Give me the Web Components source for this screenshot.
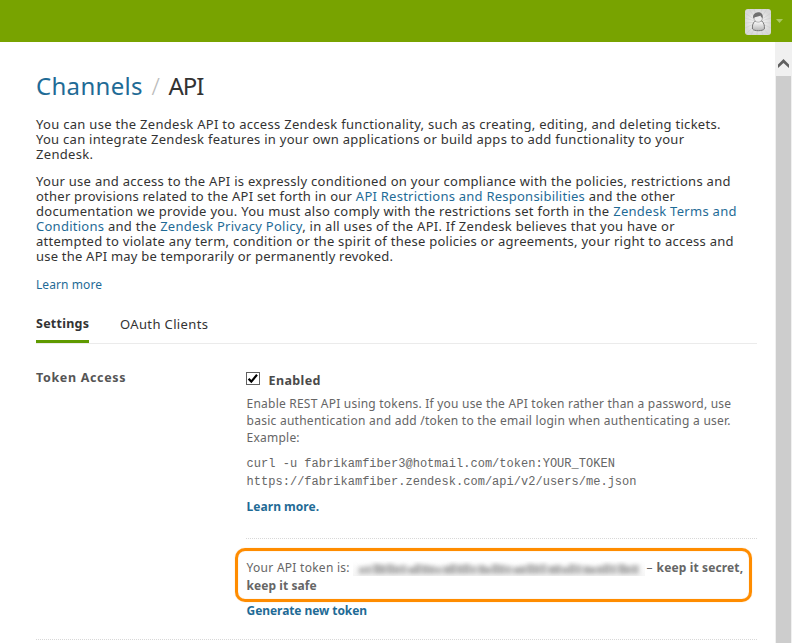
<!DOCTYPE html>
<html lang="en">
<head>
<meta charset="utf-8">
<title>Channels / API</title>
<style>
html, body { margin: 0; height: 100%; overflow: hidden; background: #fff; }
body { font-family: "Noto Sans", "Open Sans", sans-serif; color: #333; }
</style>
</head>
<body>
<api-page></api-page>
<script>
const define = (name, html, setup) => {
  const t = document.createElement('template');
  t.innerHTML = html;
  customElements.define(name, class extends HTMLElement {
    constructor() {
      super();
      this.attachShadow({ mode: 'open' }).append(t.content.cloneNode(true));
    }
    connectedCallback() { if (setup) setup(this); }
  });
};

/* One line of text whose tracking is adjusted to a given measure. */
define('text-line', `
<style>
:host { display: block; white-space: nowrap; }
.run { display: inline-block; }
::slotted(a) { color: #1f6b96; text-decoration: none; }
</style><span class="run"><slot></slot></span>`, el => {
  const run = el.shadowRoot.querySelector('.run');
  const target = +el.getAttribute('measure');
  const natural = run.getBoundingClientRect().width;
  const n = el.textContent.length;
  if (natural) {
    const s = (target - natural) / (n - 1);
    run.style.letterSpacing = s + 'px';
    run.style.marginRight = -s + 'px';
  }
});

define('top-bar', `
<style>
:host { display: flex; height: 42px; box-sizing: border-box; background: #78a300; justify-content: flex-end; align-items: center; padding: 2px 9px 0 0; gap: 5px; }
svg { display: block; }
.caret { margin-bottom: 2px; }
</style>
<svg width="26" height="26" viewBox="0 0 26 26">
  <defs>
    <radialGradient id="bg"><stop offset="0" stop-color="#fff"/><stop offset="1" stop-color="#d8d8d8"/></radialGradient>
    <linearGradient id="body" x2="0" y2="1"><stop offset="0" stop-color="#fff"/><stop offset="1" stop-color="#b5b5b5"/></linearGradient>
  </defs>
  <rect width="26" height="26" rx="3" fill="url(#bg)"/>
  <path d="M13 13L0 4M13 13L4 0M13 13L9 0M13 13L17 0M13 13L22 0M13 13L26 4M13 13L26 9M13 13L26 14M13 13L26 19M13 13L24 26M13 13L18 26M13 13L12 26M13 13L6 26M13 13L1 25M13 13L0 19M13 13L0 14M13 13L0 9" stroke="#c9c9c9" stroke-width=".5" fill="none"/>
  <path d="M10 12.2C7.6 14 7 17.5 7.6 20C9 22.3 17.7 22.3 19.3 20C19.8 17 19 14 16.9 12Z" fill="url(#body)" stroke="#777"/>
  <circle cx="13.2" cy="9" r="4.2" fill="#ededed" stroke="#999" stroke-width=".7"/>
  <path d="M8.3 9.6C7.3 5.5 10.3 3.4 13 3.3C16.5 3.1 18.4 5.7 17.6 9C16.6 8.5 16 7.7 15.4 6.4C13.5 8 10.2 6.8 8.3 9.6Z" fill="#707070"/>
</svg>
<svg class="caret" width="7" height="4" viewBox="0 0 7 4"><path d="M0 0H7L3.5 4Z" fill="#aac95e"/></svg>`);

define('scroll-rail', `
<style>
:host { display: flex; flex-direction: column; width: 17px; background: #f0f0f0; align-items: center; }
.up { height: 34px; display: flex; align-items: center; padding-top: 8px; box-sizing: border-box; }
.thumb { flex: 1; width: 15px; background: #cdcdcd; }
</style>
<div class="up"><svg width="11" height="9" viewBox="0 0 11 9"><path d="M0 5.5L5.5 0L11 5.5V9L5.5 4L0 9Z" fill="#606060"/></svg></div>
<div class="thumb"></div>`);

define('crumb-title', `
<style>
:host { display: flex; font-size: 24px; line-height: 32px; height: 32px; }
.sep { color: #bbb; font-weight: 300; padding: 0 8px 0 9px; width: 9px; }
a { color: #1f6b96; }
</style>
<text-line measure="106.5"><a>Channels</a></text-line><span class="sep">/</span><text-line measure="36">API</text-line>`);

define('page-intro', `
<style>
:host { display: block; font-size: 13px; line-height: 15px; }
p { margin: 0 0 12px; }
.more { font-size: 12px; padding-top: 1px; }
a { color: #1f6b96; }
</style>
<p>
<text-line measure="684.5">You can use the Zendesk API to access Zendesk functionality, such as creating, editing, and deleting tickets.</text-line>
<text-line measure="648">You can integrate Zendesk features in your own applications or build apps to add functionality to your</text-line>
<text-line measure="57">Zendesk.</text-line>
</p>
<p>
<text-line measure="694.5">Your use and access to the API is expressly conditioned on your compliance with the policies, restrictions and</text-line>
<text-line measure="639">other provisions related to the API set forth in our <a>API Restrictions and Responsibilities</a> and the other</text-line>
<text-line measure="700.5">documentation we provide you. You must also comply with the restrictions set forth in the <a>Zendesk Terms and</a></text-line>
<text-line measure="638.5"><a>Conditions</a> and the <a>Zendesk Privacy Policy</a>, in all uses of the API. If Zendesk believes that you have or</text-line>
<text-line measure="697.5">attempted to violate any term, condition or the spirit of these policies or agreements, your right to access and</text-line>
<text-line measure="357">use the API may be temporarily or permanently revoked.</text-line>
</p>
<text-line class="more" measure="66"><a>Learn more</a></text-line>`);

define('tab-strip', `
<style>
:host { display: flex; gap: 31px; font-size: 13px; line-height: 18px; border-bottom: 1px solid #ebebeb; height: 28px; }
.on { font-weight: 700; font-size: 12.5px; border-bottom: 3px solid #5f9a00; height: 25px; width: 53px; }
</style>
<div class="on"><text-line measure="53">Settings</text-line></div>
<div><text-line measure="88">OAuth Clients</text-line></div>`);

define('check-box', `
<style>
:host { display: block; width: 14px; height: 13px; }
svg { display: block; }
</style>
<svg width="14" height="13" viewBox="0 0 14 13"><rect x=".5" y=".5" width="13" height="12" fill="#fff" stroke="#606060"/><path d="M2.6 6.7L5.3 9.6L11 2.8" fill="none" stroke="#000" stroke-width="2.2"/></svg>`);

/* Obscured secret: soft grey marks in place of the characters. */
define('masked-token', `
<style>
:host { display: block; width: 292px; height: 15px; overflow: hidden; background: linear-gradient(#fff, #f6f6f6); }
svg { display: block; }
</style>
<svg width="292" height="15" viewBox="0 0 292 15"><defs><filter id="b" x="-5%" y="-80%" width="110%" height="260%" color-interpolation-filters="sRGB"><feGaussianBlur stdDeviation="2.8 2.3"/></filter></defs><g filter="url(#b)" fill="#b4b4b4"></g></svg>`, el => {
  const g = el.shadowRoot.querySelector('g');
  if (g.childElementCount) return;
  const tops = [6, 5, 3, 4, 3, 5, 4, 6, 3, 4, 5];
  const widths = [6, 5, 7, 6, 6.5];
  for (let x = 6, i = 0; x < 283; x += 7, i++) {
    const r = document.createElementNS('http://www.w3.org/2000/svg', 'rect');
    const y = tops[i % 11];
    r.setAttribute('x', x);
    r.setAttribute('y', y);
    r.setAttribute('width', widths[i % 5]);
    r.setAttribute('height', 13 - y);
    g.append(r);
  }
});

define('token-box', `
<style>
:host { display: block; box-sizing: border-box; width: 517px; height: 54px; margin-left: -11px; border: 3px solid #ff8c00; border-radius: 10px; padding: 8px 0 0 8.6px; font-size: 12px; line-height: 18px; color: #666; box-shadow: 0 0 1px #ffb65c, inset 0 0 1px #ffb65c; }
.row { display: flex; align-items: center; }
masked-token { margin: 0 2px 0 3px; }
b { font-weight: 700; }
.dash { width: 10px; }
</style>
<div class="row"><text-line measure="103">Your API token is:</text-line><masked-token></masked-token><span class="dash">–</span><b><text-line measure="86.5">keep it secret,</text-line></b></div>
<b><text-line measure="70">keep it safe</text-line></b>`);

define('token-settings', `
<style>
:host { display: grid; grid-template-columns: 210px 1fr; font-size: 12px; line-height: 17px; color: #666; border-bottom: 1px dotted #d8d8d8; height: 270px; }
h2 { margin: 0; font-size: 12.5px; line-height: 17px; color: #555; }
.check { display: flex; gap: 8.5px; font-weight: 700; color: #4a4a4a; font-size: 12.5px; padding-top: 3px; height: 23px; }
.hint { padding-left: .6px; }
.code { font-family: "Liberation Mono", monospace; letter-spacing: .02px; line-height: 18px; white-space: pre; margin: 9px 0 7px; padding-left: .6px; }
.link { font-weight: 700; color: #1f6b96; padding-left: .6px; }
.rule { border-bottom: 1px dotted #d8d8d8; margin: 23px 0 9px; }
</style>
<h2><text-line measure="89.5">Token Access</text-line></h2>
<div>
  <div class="check"><check-box></check-box><text-line measure="52">Enabled</text-line></div>
  <text-line class="hint" measure="484.5">Enable REST API using tokens. If you use the API token rather than a password, use</text-line>
  <text-line class="hint" measure="484">basic authentication and add /token to the email login when authenticating a user.</text-line>
  <text-line class="hint" measure="53">Example:</text-line>
  <div class="code">curl -u fabrikamfiber3@hotmail.com/token:YOUR_TOKEN
https://fabrikamfiber.zendesk.com/api/v2/users/me.json</div>
  <text-line class="link" measure="72.5">Learn more.</text-line>
  <div class="rule"></div>
  <token-box></token-box>
  <text-line class="link" measure="120.5">Generate new token</text-line>
</div>`);

define('api-page', `
<style>
:host { display: flex; flex-direction: column; height: 643px; overflow: hidden; }
.view { flex: 1; display: flex; min-height: 0; }
main { flex: 1; padding: 28px 18px 0 36px; min-width: 0; }
page-intro { margin-top: 15px; }
tab-strip { margin-top: 23px; }
token-settings { margin-top: 25px; }
</style>
<top-bar></top-bar>
<div class="view">
<main><crumb-title></crumb-title><page-intro></page-intro><tab-strip></tab-strip><token-settings></token-settings></main>
<scroll-rail></scroll-rail>
</div>`);
</script>
</body>
</html>
